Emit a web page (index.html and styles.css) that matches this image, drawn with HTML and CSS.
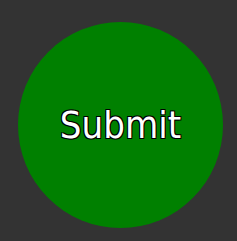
FILE: index.html
```html
<!DOCTYPE html>
<html>
<head>
    <meta charset="UTF-8">
    <link rel="stylesheet" href="styles.css">
</head>
<body>
    <div class="stage">
        <button class="submit" type="button">Submit</button>
    </div>
</body>
</html>
```

FILE: styles.css
```css
html, body {
    margin: 0;
    padding: 0;
    background-color: #333333;
}

.stage {
    width: 237px;
    height: 241px;
    display: flex;
    justify-content: center;
    align-items: center;
}

.submit {
    width: 205px;
    height: 206px;
    margin-left: 4px;
    margin-top: 9px;
    border: none;
    border-radius: 50%;
    background-color: #008000;
    color: #ffffff;
    font-family: "DejaVu Sans Condensed", "DejaVu Sans", sans-serif;
    font-size: 38px;
    padding: 0;
    cursor: pointer;
    /* contorno oscuro del texto */
    text-shadow: -1px -1px 0 #000, 1px -1px 0 #000, -1px 1px 0 #000, 1px 1px 0 #000;
}
```
